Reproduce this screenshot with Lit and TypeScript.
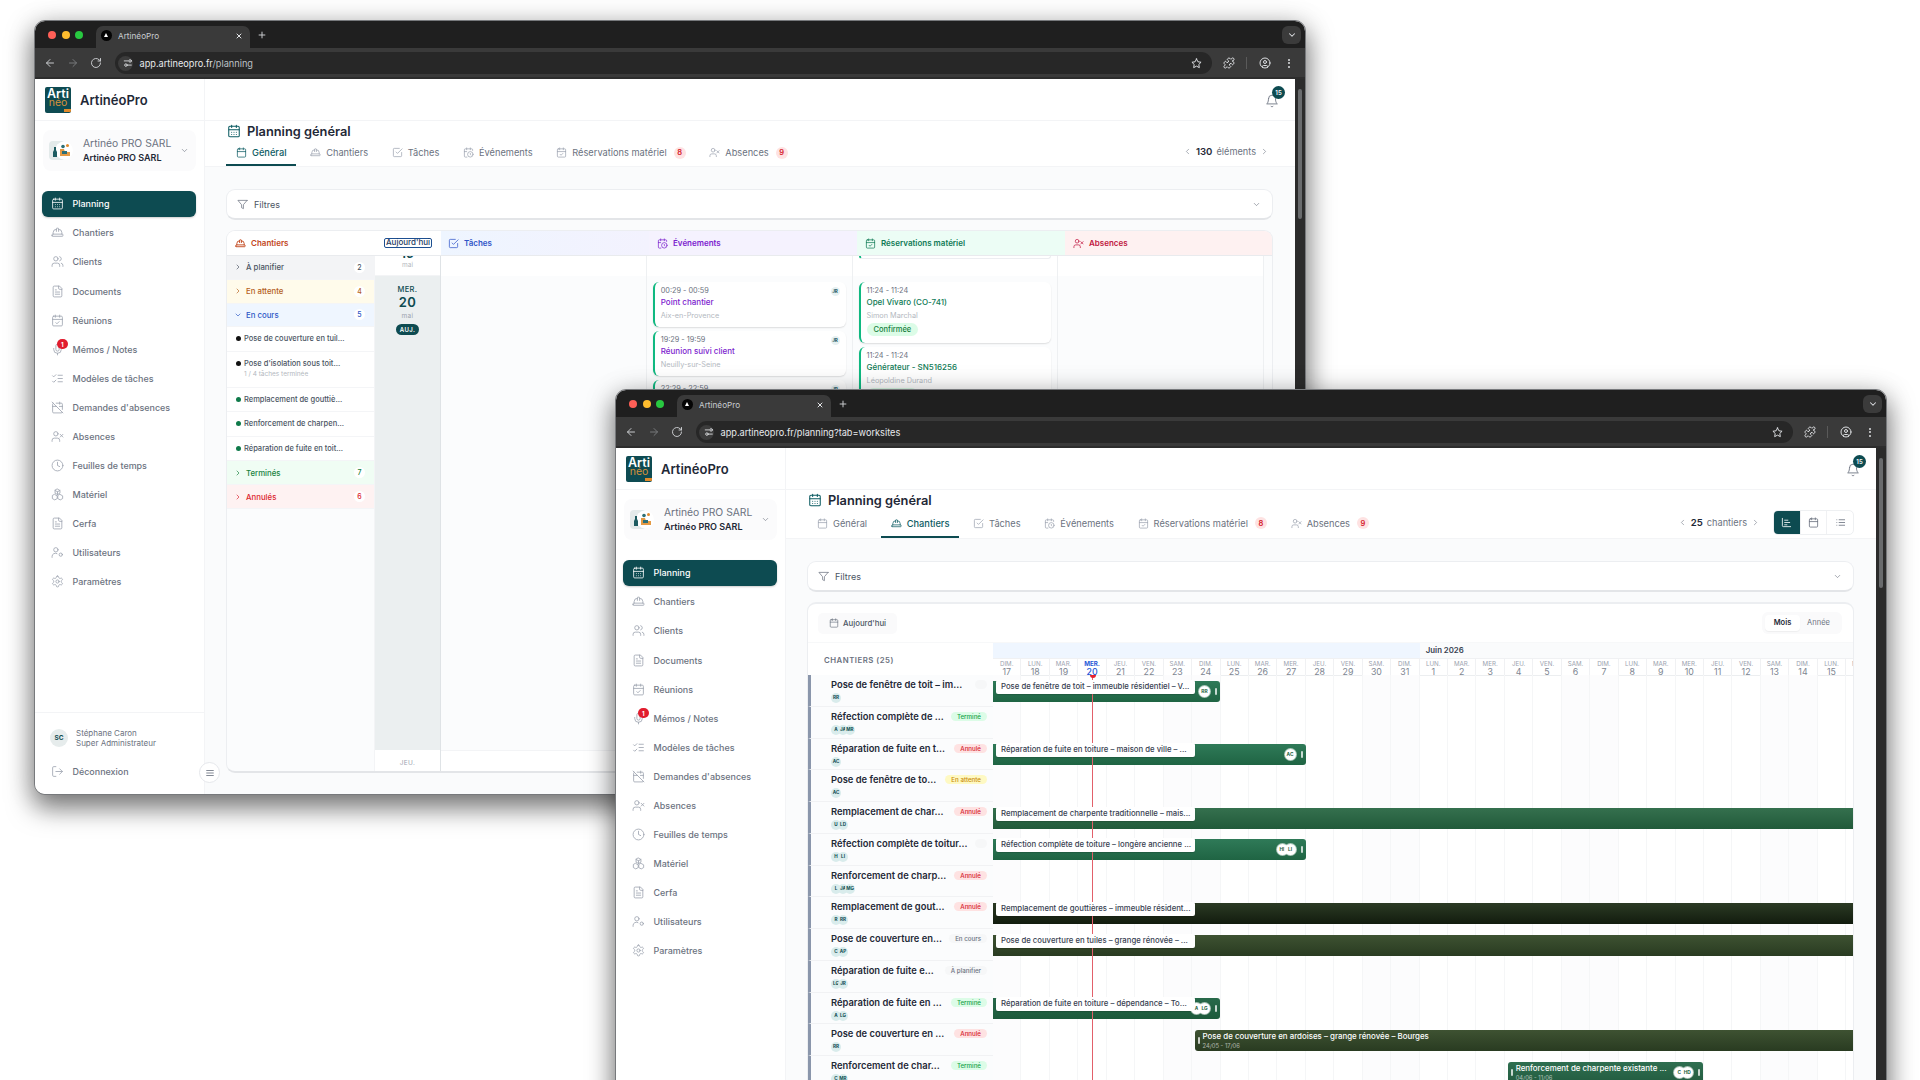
import {LitElement, html, css, svg, SVGTemplateResult, TemplateResult} from 'lit';
import {customElement, property} from 'lit/decorators.js';
import {classMap} from 'lit/directives/class-map.js';

const USER_BODY = svg`<path d="M16 21v-2a4 4 0 0 0-4-4H6a4 4 0 0 0-4 4v2"/><circle cx="9" cy="7" r="4"/>`;
const CAL = svg`<rect x="3" y="4" width="18" height="18" rx="2"/><path d="M16 2v4M8 2v4M3 10h18"/>`;

const ICONS: Record<string, SVGTemplateResult> = {
    calendar: CAL,
    calendarDays: svg`${CAL}<path d="M8 14h.01M12 14h.01M16 14h.01M8 18h.01M12 18h.01M16 18h.01"/>`,
    calendarCheck: svg`${CAL}<path d="m9 16 2 2 4-4"/>`,
    calendarOff: svg`<path d="M4.2 4.2A2 2 0 0 0 3 6v14a2 2 0 0 0 2 2h14a2 2 0 0 0 1.82-1.18M21 15.5V6a2 2 0 0 0-2-2H9.5M16 2v4M3 10h7M21 10h-5.5M2 2l20 20"/>`,
    calendarClock: svg`<path d="M21 7.5V6a2 2 0 0 0-2-2H5a2 2 0 0 0-2 2v14a2 2 0 0 0 2 2h3.5M16 2v4M8 2v4M3 10h5M17.5 17.5 16 16.3V14"/><circle cx="16" cy="16" r="6"/>`,
    hat: svg`<path d="M2 18a1 1 0 0 0 1 1h18a1 1 0 0 0 1-1v-2a1 1 0 0 0-1-1H3a1 1 0 0 0-1 1v2zM10 10V5a1 1 0 0 1 1-1h2a1 1 0 0 1 1 1v5M4 15v-3a6 6 0 0 1 6-6M14 6a6 6 0 0 1 6 6v3"/>`,
    users: svg`${USER_BODY}<path d="M22 21v-2a4 4 0 0 0-3-3.87M16 3.13a4 4 0 0 1 0 7.75"/>`,
    file: svg`<path d="M15 2H6a2 2 0 0 0-2 2v16a2 2 0 0 0 2 2h12a2 2 0 0 0 2-2V7ZM14 2v4a2 2 0 0 0 2 2h4M10 9H8M16 13H8M16 17H8"/>`,
    mic: svg`<path d="M12 2a3 3 0 0 0-3 3v7a3 3 0 0 0 6 0V5a3 3 0 0 0-3-3ZM19 10v2a7 7 0 0 1-14 0v-2M12 19v3"/>`,
    listChecks: svg`<path d="m3 17 2 2 4-4M3 7l2 2 4-4M13 6h8M13 12h8M13 18h8"/>`,
    userX: svg`${USER_BODY}<path d="m17 8 5 5M22 8l-5 5"/>`,
    clock: svg`<circle cx="12" cy="12" r="10"/><path d="M12 6v6l4 2"/>`,
    boxes: svg`<path d="m12 2 4.5 2.5v5L12 12 7.5 9.5v-5zM7 12l4.5 2.5v5L7 22l-4.5-2.5v-5zM17 12l4.5 2.5v5L17 22l-4.5-2.5v-5zM7.5 4.5 12 7l4.5-2.5M12 7v5"/>`,
    userCog: svg`<path d="M2 21v-2a6 6 0 0 1 9-5"/><circle cx="9" cy="7" r="4"/><circle cx="18" cy="16" r="3"/>`,
    gear: svg`<path d="M12.22 2h-.44a2 2 0 0 0-2 2v.18a2 2 0 0 1-1 1.73l-.43.25a2 2 0 0 1-2 0l-.15-.08a2 2 0 0 0-2.73.73l-.22.38a2 2 0 0 0 .73 2.73l.15.1a2 2 0 0 1 1 1.72v.51a2 2 0 0 1-1 1.74l-.15.09a2 2 0 0 0-.73 2.73l.22.38a2 2 0 0 0 2.73.73l.15-.08a2 2 0 0 1 2 0l.43.25a2 2 0 0 1 1 1.73V20a2 2 0 0 0 2 2h.44a2 2 0 0 0 2-2v-.18a2 2 0 0 1 1-1.73l.43-.25a2 2 0 0 1 2 0l.15.08a2 2 0 0 0 2.73-.73l.22-.39a2 2 0 0 0-.73-2.73l-.15-.08a2 2 0 0 1-1-1.74v-.5a2 2 0 0 1 1-1.74l.15-.09a2 2 0 0 0 .73-2.73l-.22-.38a2 2 0 0 0-2.73-.73l-.15.08a2 2 0 0 1-2 0l-.43-.25a2 2 0 0 1-1-1.73V4a2 2 0 0 0-2-2z"/><circle cx="12" cy="12" r="3"/>`,
    logout: svg`<path d="M9 21H5a2 2 0 0 1-2-2V5a2 2 0 0 1 2-2h4M16 17l5-5-5-5M21 12H9"/>`,
    funnel: svg`<path d="M22 3H2l8 9.46V19l4 2v-8.54L22 3z"/>`,
    check: svg`<path d="m9 11 3 3L22 4M21 12v7a2 2 0 0 1-2 2H5a2 2 0 0 1-2-2V5a2 2 0 0 1 2-2h11"/>`,
    down: svg`<path d="m6 9 6 6 6-6"/>`,
    right: svg`<path d="m9 18 6-6-6-6"/>`,
    left: svg`<path d="m15 18-6-6 6-6"/>`,
    bell: svg`<path d="M6 8a6 6 0 0 1 12 0c0 7 3 9 3 9H3s3-2 3-9M10.3 21a1.94 1.94 0 0 0 3.4 0"/>`,
    menu: svg`<path d="M4 6h16M4 12h16M4 18h16"/>`,
    gantt: svg`<path d="M3 3v16a2 2 0 0 0 2 2h16M8 7h7M8 12h11M8 17h5"/>`,
    list: svg`<path d="M9 6h12M9 12h12M9 18h12M4 6h.01M4 12h.01M4 18h.01"/>`,
    back: svg`<path d="M19 12H5M12 19l-7-7 7-7"/>`,
    forward: svg`<path d="M5 12h14M12 5l7 7-7 7"/>`,
    reload: svg`<path d="M21 12a9 9 0 1 1-2.64-6.36L21 8M21 3v5h-5"/>`,
    tune: svg`<path d="M3 7h9M20 17h-9"/><circle cx="17" cy="7" r="3"/><circle cx="7" cy="17" r="3"/>`,
    star: svg`<path d="m12 2 3.09 6.26L22 9.27l-5 4.87 1.18 6.88L12 17.77l-6.18 3.25L7 14.14 2 9.27l6.91-1.01L12 2z"/>`,
    puzzle: svg`<path d="M19.439 7.85c-.049.322.059.648.289.878l1.568 1.568c.47.47.706 1.087.706 1.704s-.235 1.233-.706 1.704l-1.611 1.611a.98.98 0 0 1-.837.276c-.47-.07-.802-.48-.968-.925a2.501 2.501 0 1 0-3.214 3.214c.446.166.855.497.925.968a.979.979 0 0 1-.276.837l-1.61 1.61a2.404 2.404 0 0 1-1.705.707 2.402 2.402 0 0 1-1.704-.706l-1.568-1.568a1.026 1.026 0 0 0-.877-.29c-.493.074-.84.504-1.02.968a2.5 2.5 0 1 1-3.237-3.237c.464-.18.894-.527.967-1.02a1.026 1.026 0 0 0-.289-.877l-1.568-1.568A2.402 2.402 0 0 1 1.998 12c0-.617.236-1.234.706-1.704L4.23 8.77c.24-.24.581-.353.917-.303.515.077.877.528 1.073 1.01a2.5 2.5 0 1 0 3.259-3.259c-.482-.196-.933-.558-1.01-1.073-.05-.336.062-.676.303-.917l1.525-1.525A2.402 2.402 0 0 1 12 1.998c.617 0 1.234.236 1.704.706l1.568 1.568c.23.23.556.338.877.29.493-.074.84-.504 1.02-.968a2.5 2.5 0 1 1 3.237 3.237c-.464.18-.894.527-.967 1.02Z"/>`,
    profile: svg`<circle cx="12" cy="12" r="10"/><circle cx="12" cy="10" r="3"/><path d="M7 20.66V19a2 2 0 0 1 2-2h6a2 2 0 0 1 2 2v1.66"/>`,
    close: svg`<path d="M18 6 6 18M6 6l12 12"/>`,
    plus: svg`<path d="M5 12h14M12 5v14"/>`,
};

function icon(name: string, size = 12, width = 1.6) {
    return html`<svg class="ic" width=${size} height=${size} viewBox="0 0 24 24" fill="none" stroke="currentColor"
        stroke-width=${width} stroke-linecap="round" stroke-linejoin="round">${ICONS[name]}</svg>`;
}

const base = css`
    * { box-sizing: border-box; }
    .ic { display: block; flex: none; }
`;

@customElement('browser-window')
class BrowserWindow extends LitElement {
    static styles = [base, css`
    :host {
        display: flex;
        flex-direction: column;
        width: 1270px;
        height: 773px;
        border-radius: 10px;
        overflow: hidden;
        background: #fff;
        font-family: Inter, "Liberation Sans", sans-serif;
        outline: 1px solid #77797c;
        box-shadow: 0 12px 26px 2px rgba(0,0,0,.5), 0 2px 30px rgba(0,0,0,.14);
    }
    .tabstrip {
        height: 27px;
        flex: none;
        display: flex;
        align-items: flex-end;
        background: #1f1f1f;
        padding-left: 13px;
        color: #dfe1e5;
    }
    .dots {
        display: flex;
        gap: 5.5px;
        align-self: center;
        width: 48px;
    }
    .dots i { width: 8px; height: 8px; border-radius: 50%; }
    .tab {
        width: 154px;
        height: 22px;
        background: #3a3a3a;
        border-radius: 7px 7px 0 0;
        display: flex;
        align-items: center;
        padding: 0 7px 3px 5px;
        font-size: 8.2px;
        color: #c9ccd0;
    }
    .fav {
        width: 11px;
        height: 11px;
        border-radius: 50%;
        background: #050505;
        margin-right: 6px;
        position: relative;
        flex: none;
    }
    .fav::after {
        content: '';
        position: absolute;
        left: 3px;
        top: 3px;
        border: 2.5px solid transparent;
        border-top: 0;
        border-bottom: 4px solid #fff;
    }
    .tab .x { margin-left: auto; color: #e4e6e9; }
    .plus { align-self: center; margin-left: 7px; color: #c7c9cc; }
    .caret {
        margin-left: auto;
        margin-right: 4px;
        align-self: center;
        width: 19px;
        height: 18px;
        background: #3b3b3b;
        border-radius: 6px;
        display: grid;
        place-items: center;
    }
    .toolbar {
        height: 31px;
        flex: none;
        background: #3a3a3a;
        border-bottom: 2px solid #2d2d2d;
        display: flex;
        align-items: center;
        color: #c7c9cc;
        padding: 1px 0 0 9px;
    }
    .nav { display: flex; gap: 11px; align-items: center; width: 71px; }
    .nav .off { color: #77797b; }
    .omni {
        width: 1097px;
        height: 22px;
        border-radius: 11px;
        background: #272727;
        display: flex;
        align-items: center;
        padding: 0 10px 0 3px;
        font-size: 9.2px;
        color: #e8eaed;
    }
    .site {
        width: 15px;
        height: 15px;
        border-radius: 50%;
        background: #3c3c3c;
        display: grid;
        place-items: center;
        margin-right: 6.5px;
    }
    .omni .path { color: var(--path-color, #e8eaed); }
    .omni .ic:last-child { margin-left: auto; color: #e8eaed; }
    .actions { display: flex; align-items: center; margin-left: 11px; color: #dcdee1; }
    .sep { width: 1px; height: 12px; background: #5a5a5a; margin: 0 12px 0 11px; }
    .more { display: flex; flex-direction: column; gap: 1.5px; margin-left: 17px; }
    .more i { width: 2px; height: 2px; border-radius: 50%; background: #dcdee1; }
    .viewport { flex: 1; display: flex; min-height: 0; }
    .content { flex: 1; min-width: 0; display: flex; }
    .scrollbar { width: 10px; flex: none; background: #2b2b2b; padding: 10px 3px 0; }
    .scrollbar i { display: block; width: 4px; height: 130px; background: #696b6d; border-radius: 2px; }
    `];

    @property() host = '';
    @property() path = '';

    render() {
        return html`
            <div class="tabstrip">
                <div class="dots">
                    <i style="background:#ff5f57"></i><i style="background:#febc2e"></i><i style="background:#28c840"></i>
                </div>
                <div class="tab"><span class="fav"></span>ArtinéoPro<span class="x">${icon('close', 8, 3)}</span></div>
                <span class="plus">${icon('plus', 10, 2.4)}</span>
                <div class="caret">${icon('down', 10, 2.5)}</div>
            </div>
            <div class="toolbar">
                <div class="nav">
                    ${icon('back', 12, 2)}
                    <span class="off">${icon('forward', 12, 2)}</span>
                    ${icon('reload', 12, 2)}
                </div>
                <div class="omni">
                    <span class="site">${icon('tune', 10, 2)}</span>
                    <span>${this.host}<span class="path">${this.path}</span></span>
                    ${icon('star', 11, 2)}
                </div>
                <div class="actions">
                    ${icon('puzzle', 12, 2)}
                    <span class="sep"></span>
                    ${icon('profile', 12, 2)}
                    <span class="more"><i></i><i></i><i></i></span>
                </div>
            </div>
            <div class="viewport">
                <div class="content"><slot></slot></div>
                <div class="scrollbar"><i></i></div>
            </div>
        `;
    }
}

const NAV = [
    ['calendarDays', 'Planning'],
    ['hat', 'Chantiers'],
    ['users', 'Clients'],
    ['file', 'Documents'],
    ['calendarCheck', 'Réunions'],
    ['mic', 'Mémos / Notes'],
    ['listChecks', 'Modèles de tâches'],
    ['calendarOff', "Demandes d'absences"],
    ['userX', 'Absences'],
    ['clock', 'Feuilles de temps'],
    ['boxes', 'Matériel'],
    ['file', 'Cerfa'],
    ['userCog', 'Utilisateurs'],
    ['gear', 'Paramètres'],
];

@customElement('app-sidebar')
class AppSidebar extends LitElement {
    static styles = [base, css`
    :host {
        display: flex;
        flex-direction: column;
        width: 169px;
        flex: none;
        background: #fff;
        border-right: 1px solid #f3f4f6;
        position: relative;
        z-index: 2;
    }
    .brand {
        height: 42px;
        flex: none;
        display: flex;
        align-items: center;
        gap: 9px;
        padding-left: 10px;
        border-bottom: 1px solid #f3f4f6;
        font-size: 13px;
        font-weight: 600;
        color: #1f2937;
        margin-right: -1px;
    }
    .logo {
        width: 26px;
        height: 26px;
        border-radius: 2px;
        background: #0e4b52;
        display: flex;
        flex-direction: column;
        align-items: center;
        font-size: 12.5px;
        line-height: 11px;
        color: #fff;
        font-weight: 600;
        padding-top: 1px;
        position: relative;
        overflow: hidden;
    }
    .logo b { color: #d6923a; font-weight: 400; font-size: 10.5px; line-height: 8px; }
    .logo i {
        position: absolute;
        right: 0;
        bottom: 1px;
        width: 7px;
        height: 3px;
        background: #e08a2c;
    }
    .company {
        margin: 9px 8px 0;
        height: 41px;
        flex: none;
        border-radius: 8px;
        background: #fbfbfc;
        display: flex;
        align-items: center;
        padding: 0 7px 0 6px;
        font-size: 10.3px;
        color: #6b7280;
    }
    .company svg.mark { margin-right: 9px; flex: none; }
    .company div { flex: 1; line-height: 14.5px; }
    .company strong { display: block; font-size: 9px; font-weight: 600; color: #1f2937; }
    nav { display: flex; flex-direction: column; gap: 2.6px; margin: 19.5px 8px 0 7px; }
    a {
        height: 26.5px;
        display: flex;
        align-items: center;
        gap: 8.5px;
        padding-left: 9px;
        border-radius: 6px;
        font-size: 8.95px;
        font-weight: 500;
        color: #6b7280;
        position: relative;
    }
    a .ic { color: #9ca3af; }
    a.on { background: #0d4b51; color: #fff; box-shadow: 0 1px 2px rgba(0,0,0,.2); }
    a.on .ic { color: #fff; }
    .dot {
        position: absolute;
        left: 15px;
        top: 3px;
        width: 10.5px;
        height: 10.5px;
        border-radius: 50%;
        background: #e11d2e;
        color: #fff;
        font-size: 6px;
        font-weight: 700;
        display: grid;
        place-items: center;
    }
    footer { margin-top: auto; flex: none; height: 82px; border-top: 1px solid #f3f4f6; }
    .user {
        display: flex;
        align-items: center;
        gap: 8px;
        margin: 15px 0 0 15px;
        font-size: 8px;
        line-height: 10px;
        color: #6b7280;
    }
    .avatar {
        width: 18px;
        height: 18px;
        border-radius: 50%;
        background: #e6ecec;
        color: #0d4b51;
        font-size: 6.5px;
        font-weight: 700;
        display: grid;
        place-items: center;
    }
    .logout {
        display: flex;
        align-items: center;
        gap: 8.5px;
        margin: 17px 0 0 16px;
        font-size: 8.95px;
        font-weight: 500;
        color: #6b7280;
    }
    .logout .ic { color: #9ca3af; }
    .fold {
        position: absolute;
        right: -16px;
        bottom: 11px;
        width: 21px;
        height: 21px;
        border-radius: 50%;
        border: 1px solid #e5e7eb;
        background: #fff;
        display: grid;
        place-items: center;
        color: #6b7280;
    }
    `];

    render() {
        return html`
            <div class="brand">
                <div class="logo">Arti<b>néo</b><i></i></div>
                ArtinéoPro
            </div>
            <div class="company">
                <svg class="mark" width="25" height="19" viewBox="0 0 25 19">
                    <rect width="16" height="19" rx="4" fill="#e3eaea"/>
                    <circle cx="15" cy="9.5" r="9" fill="#fff"/>
                    <path d="M5 6h2v3l1 2v5H4v-5l1-2z" fill="#1c5b60"/>
                    <circle cx="14" cy="5.5" r="1.8" fill="#2f6f74"/><circle cx="18.5" cy="4.5" r="1.5" fill="#e28a2c"/>
                    <path d="M11 8h4l1 3h5v4H11z" fill="#e49a45"/><path d="M13 10h5v3h-5z" fill="#2c6f78"/>
                </svg>
                <div>Artinéo PRO SARL<strong>Artinéo PRO SARL</strong></div>
                ${icon('down', 9)}
            </div>
            <nav>
                ${NAV.map(([ic, label], i) => html`
                    <a class=${classMap({on: i === 0})}>
                        ${icon(ic, 13, 1.5)}${label}
                        ${label.startsWith('Mémos') ? html`<span class="dot">1</span>` : ''}
                    </a>
                `)}
            </nav>
            <footer>
                <div class="user">
                    <span class="avatar">SC</span>
                    <span>Stéphane Caron<br>Super Administrateur</span>
                </div>
                <div class="logout">${icon('logout', 13, 1.5)}Déconnexion</div>
            </footer>
            <span class="fold">${icon('menu', 10, 2)}</span>
        `;
    }
}

const TABS = [
    ['calendar', 'Général', ''],
    ['hat', 'Chantiers', ''],
    ['check', 'Tâches', ''],
    ['calendarClock', 'Événements', ''],
    ['calendarCheck', 'Réservations matériel', '8'],
    ['userX', 'Absences', '9'],
];

@customElement('page-top')
class PageTop extends LitElement {
    static styles = [base, css`
    :host { display: block; flex: none; background: #fff; }
    .topbar {
        height: 42px;
        border-bottom: 1px solid #f3f4f6;
        display: flex;
        justify-content: flex-end;
        padding: 15px 16px 0 0;
    }
    .bell { position: relative; color: #6b7280; height: 14px; }
    .bell span {
        position: absolute;
        left: 7px;
        top: -8px;
        width: 13px;
        height: 13px;
        border-radius: 50%;
        background: #0d4b51;
        color: #fff;
        font-size: 6px;
        font-weight: 600;
        display: grid;
        place-items: center;
    }
    .title {
        height: 20px;
        display: flex;
        align-items: center;
        gap: 6px;
        padding-left: 22px;
        font-size: 12.8px;
        font-weight: 600;
        color: #1f2937;
    }
    .title .ic { color: #0d5c63; }
    .bar {
        display: flex;
        align-items: center;
        justify-content: space-between;
        padding: 0 22px 0 21px;
        border-bottom: 1px solid #f3f4f6;
    }
    .bar.tall { height: 29px; }
    .bar.short { height: 26px; }
    .tabs { display: flex; gap: 3.7px; height: 100%; }
    .tab {
        display: flex;
        align-items: center;
        gap: 5px;
        padding: 0 10px;
        font-size: 9.25px;
        color: #6b7280;
        border-bottom: 2px solid transparent;
    }
    .tab .ic { color: #9ca3af; }
    .tab.on { color: #0d5c63; border-color: #0d4b51; font-weight: 500; }
    .tab.on .ic { color: #0d5c63; }
    .badge {
        width: 12px;
        height: 12px;
        border-radius: 50%;
        background: #fee2e2;
        color: #d5202c;
        font-size: 7.5px;
        font-weight: 600;
        display: grid;
        place-items: center;
        margin-left: 2px;
    }
    `];

    @property() active = '';
    @property() size = 'short';

    render() {
        return html`
            <div class="topbar"><div class="bell">${icon('bell', 14, 1.5)}<span>15</span></div></div>
            <div class="title">${icon('calendarDays', 14, 1.8)}Planning général</div>
            <div class="bar ${this.size}">
                <div class="tabs">
                    ${TABS.map(([ic, label, count]) => html`
                        <div class=${classMap({tab: true, on: label === this.active})}>
                            ${icon(ic, 11, 1.6)}${label}
                            ${count ? html`<span class="badge">${count}</span>` : ''}
                        </div>
                    `)}
                </div>
                <slot></slot>
            </div>
        `;
    }
}

const pagerStyles = css`
    .pager {
        display: flex;
        align-items: center;
        gap: 4px;
        font-size: 9.2px;
        color: #6b7280;
    }
    .pager b { font-weight: 600; color: #1f2937; font-size: 9.6px; }
    .filters {
        height: 31px;
        flex: none;
        margin: 22px 22px 10px 21px;
        padding: 0 11px 0 10px;
        border: 1px solid #eceef1;
        border-bottom: 2px solid #e3e5e8;
        border-radius: 9px;
        background: #fff;
        display: flex;
        align-items: center;
        gap: 4px;
        font-size: 9px;
        color: #4b5563;
    }
    .filters .ic:first-child { color: #6b7280; }
    .filters .ic:last-child { color: #6b7280; margin-left: auto; }
`;

const GROUPS = [
    {label: 'À planifier', count: 2, cls: 'grey'},
    {label: 'En attente', count: 4, cls: 'amber'},
    {label: 'En cours', count: 5, cls: 'blue', open: true},
    {label: 'Terminés', count: 7, cls: 'green'},
    {label: 'Annulés', count: 6, cls: 'red'},
];

const OPEN_ITEMS = [
    {text: 'Pose de couverture en tuil...', dot: '#111'},
    {text: "Pose d'isolation sous toit...", dot: '#111', sub: '1 / 4 tâches terminée'},
    {text: 'Remplacement de gouttiè...', dot: '#0f7a4a'},
    {text: 'Renforcement de charpen...', dot: '#0f7a4a'},
    {text: 'Réparation de fuite en toit...', dot: '#0f7a4a'},
];

@customElement('planning-board')
class PlanningBoard extends LitElement {
    static styles = [base, pagerStyles, css`
    :host {
        flex: 1;
        min-width: 0;
        display: flex;
        flex-direction: column;
        background: #fafbfc;
    }
    .board {
        flex: none;
        height: 543px;
        margin: 0 22px 0 21px;
        border: 1px solid #eceef1;
        border-bottom: 2px solid #e3e5e8;
        border-radius: 9px;
        background: #fbfcfd;
        overflow: hidden;
        display: flex;
        flex-direction: column;
    }
    .heads {
        height: 25px;
        flex: none;
        display: grid;
        grid-template-columns: 148px 66px 208px 208px 208px 1fr;
        border-bottom: 1px solid #e9ebee;
        font-size: 8px;
        font-weight: 600;
    }
    .heads > div { display: flex; align-items: center; gap: 5px; padding-left: 8px; }
    .h-site { color: #c2471c; background: #fff; }
    .h-today { background: #fff; justify-content: center; padding: 0 !important; }
    .h-today span {
        border: 1.5px solid #1d4f91;
        border-radius: 2px;
        height: 10px;
        line-height: 7.5px;
        padding: 0 1px;
        color: #1e3a5f;
        font-weight: 500;
    }
    .h-task { color: #2f54c8; background: linear-gradient(90deg, #eef5ff, #f3f2fe); padding-left: 7px !important; }
    .h-evt { color: #7c22ce; background: #f5f2fe; }
    .h-res { color: #0f7a55; background: #ecfdf5; }
    .h-abs { color: #c01640; background: #fef1f1; }
    .body { flex: 1; min-height: 0; display: grid; grid-template-columns: 148px 66px 1fr; }
    .groups { font-size: 7.8px; border-right: 1px solid #f3f4f6; }
    .group {
        height: 23.8px;
        display: flex;
        align-items: center;
        padding: 0 9px 0 7px;
        font-weight: 500;
        border-bottom: 1px solid #f4f5f7;
    }
    .group .ic { margin-right: 4px; }
    .group span {
        margin-left: auto;
        width: 11px;
        height: 11px;
        border-radius: 50%;
        background: #fff;
        font-size: 7px;
        display: grid;
        place-items: center;
    }
    .grey { background: #f3f4f6; color: #4b5563; }
    .amber { background: #fffbeb; color: #b45f1d; }
    .blue { background: #eff6ff; color: #2b57c6; }
    .green { background: #f0fdf4; color: #15803d; }
    .red { background: #fef2f2; color: #dc1f2e; }
    .item {
        padding: 7px 6px 7.5px 9px;
        background: #fff;
        border-bottom: 1px solid #f4f5f7;
        font-size: 7.5px;
        font-weight: 500;
        line-height: 9px;
        color: #4b5563;
    }
    .item div { display: flex; align-items: center; gap: 3px; }
    .item i { width: 5px; height: 5px; border-radius: 50%; }
    .item small {
        display: block;
        margin: 2.5px 0 0 8px;
        font-size: 6.5px;
        font-weight: 400;
        color: #b3b8c0;
    }
    .days {
        display: flex;
        flex-direction: column;
        text-align: center;
        background: #ebeff0;
        border-right: 1px solid #dfe3e6;
    }
    .cap {
        height: 19.5px;
        flex: none;
        background: #fff;
        color: #b3b8c0;
        font-size: 6.5px;
        line-height: 10px;
        border-bottom: 1px solid #f3f4f6;
        overflow: hidden;
    }
    .cap b {
        display: block;
        height: 15px;
        margin: -10px 0 -1px;
        font-size: 13px;
        line-height: 15px;
        font-weight: 600;
        color: #0d4b51;
    }
    .today { flex: 1; padding-top: 9px; color: #0d4b51; font-size: 7.5px; font-weight: 500; letter-spacing: .4px; }
    .today strong { display: block; font-size: 13px; font-weight: 600; line-height: 17px; }
    .today small { display: block; color: #9ca3af; font-size: 6.5px; line-height: 10px; font-weight: 400; }
    .today em {
        display: block;
        margin: 3px auto 0;
        width: 23px;
        height: 11px;
        border-radius: 6px;
        background: #0d4b51;
        color: #fff;
        font-style: normal;
        font-size: 6px;
        line-height: 11px;
        font-weight: 600;
    }
    .end {
        height: 21px;
        flex: none;
        background: #fff;
        color: #9ca3af;
        font-size: 6.5px;
        padding-top: 9px;
        letter-spacing: .4px;
    }
    .lanes { display: flex; flex-direction: column; min-width: 0; }
    .lane-grid { display: grid; grid-template-columns: repeat(4, 1fr); margin-right: 8px; }
    .lane-grid > div { border-right: 1px solid #eef0f2; padding: 0 6px; }
    .lane-grid.cap-row { height: 19.5px; background: #fff; }
    .lane-grid.main { flex: 1; min-height: 0; overflow: hidden; }
    .lane-end { height: 21px; flex: none; background: #fff; border-top: 1px solid #f3f4f6; }
    .stub {
        height: 3px;
        border: 1px solid #eceef1;
        border-top: 0;
        border-left: 2px solid #10b981;
        border-radius: 0 0 5px 5px;
    }
    .card {
        position: relative;
        margin-top: 4.5px;
        padding: 4px 6px 0;
        height: 44.5px;
        background: #fff;
        border-left: 2px solid #10b981;
        border-radius: 6px;
        box-shadow: 0 1px 1.5px rgba(0,0,0,.12);
        font-size: 7.3px;
        color: #6b7280;
        line-height: 9px;
    }
    .card.tall { height: 60.5px; }
    .card:first-child { margin-top: 6.5px; }
    .card b { display: block; margin-top: 2px; font-size: 8px; font-weight: 500; line-height: 11px; }
    .card small { display: block; margin-top: 3px; font-size: 7.3px; color: #b3b8c0; }
    .card u {
        position: absolute;
        right: 6px;
        top: 5px;
        width: 9px;
        height: 9px;
        border-radius: 50%;
        background: #e6f0f1;
        color: #0d4b51;
        font-size: 4.5px;
        text-decoration: none;
        text-align: center;
        font-weight: 700;
    }
    .card em {
        display: inline-block;
        margin-top: 2.5px;
        padding: 0 7px;
        height: 13px;
        line-height: 13px;
        border-radius: 7px;
        background: #dcfce7;
        color: #15803d;
        font-style: normal;
        font-size: 7.5px;
        font-weight: 500;
    }
    .purple b { color: #7c22ce; }
    .teal b { color: #0f7a55; }
    `];

    private group(g: typeof GROUPS[number]) {
        return html`<div class="group ${g.cls}">${icon(g.open ? 'down' : 'right', 8, 2)}${g.label}<span>${g.count}</span></div>`;
    }

    render() {
        return html`
            <page-top active="Général" size="short">
                <div class="pager" style="margin-top:-4px;padding-right:4px">
                    ${icon('left', 9, 1.5)}<b>130</b> éléments ${icon('right', 9, 1.5)}
                </div>
            </page-top>
            <div class="filters">${icon('funnel', 11, 1.6)}<span style="margin-left:2px">Filtres</span>${icon('down', 9)}</div>
            <div class="board">
                <div class="heads">
                    <div class="h-site">${icon('hat', 11, 2)}Chantiers</div>
                    <div class="h-today"><span>Aujourd'hui</span></div>
                    <div class="h-task">${icon('check', 11)}Tâches</div>
                    <div class="h-evt">${icon('calendarClock', 11)}Événements</div>
                    <div class="h-res">${icon('calendarCheck', 11)}Réservations matériel</div>
                    <div class="h-abs">${icon('userX', 11)}Absences</div>
                </div>
                <div class="body">
                    <div class="groups">
                        ${GROUPS.slice(0, 3).map(g => this.group(g))}
                        ${OPEN_ITEMS.map(it => html`
                            <div class="item">
                                <div><i style="background:${it.dot}"></i>${it.text}</div>
                                ${it.sub ? html`<small>${it.sub}</small>` : ''}
                            </div>
                        `)}
                        ${GROUPS.slice(3).map(g => this.group(g))}
                    </div>
                    <div class="days">
                        <div class="cap"><b>19</b>mai</div>
                        <div class="today">MER.<strong>20</strong><small>mai</small><em>AUJ.</em></div>
                        <div class="end">JEU.</div>
                    </div>
                    <div class="lanes">
                        <div class="lane-grid cap-row">
                            <div></div><div></div><div><div class="stub"></div></div><div></div>
                        </div>
                        <div class="lane-grid main">
                            <div></div>
                            <div>
                                <div class="card purple">00:29 - 00:59<u>JR</u><b>Point chantier</b><small>Aix-en-Provence</small></div>
                                <div class="card purple">19:29 - 19:59<u>JR</u><b>Réunion suivi client</b><small>Neuilly-sur-Seine</small></div>
                                <div class="card purple">22:29 - 22:59<u>JR</u></div>
                            </div>
                            <div>
                                <div class="card teal tall">11:24 - 11:24<b>Opel Vivaro (CO-741)</b><small>Simon Marchal</small><em>Confirmée</em></div>
                                <div class="card teal tall">11:24 - 11:24<b>Générateur - SN516256</b><small>Léopoldine Durand</small><em>Confirmée</em></div>
                            </div>
                            <div></div>
                        </div>
                        <div class="lane-end"></div>
                    </div>
                </div>
            </div>
        `;
    }
}

const DAY_W = 28.45;
const WEEK = ['DIM.', 'LUN.', 'MAR.', 'MER.', 'JEU.', 'VEN.', 'SAM.'];
const DAYS = Array.from({length: 31}, (_, i) => ({
    name: WEEK[i % 7],
    num: i < 15 ? 17 + i : i - 14,
    weekend: i % 7 === 0 || i % 7 === 6,
    today: i === 3,
}));

interface Bar {
    left: number;
    width: number;
    top: string;
    bottom: string;
    label?: string;
    free?: string;
    dates?: string;
    people?: string[];
}

const GREEN = ['#2f7a58', '#1f6443'];
const MOSS = ['#35704e', '#215a3a'];
const BLACK = ['#2b3a24', '#121c0e'];
const OLIVE = ['#3e5232', '#293b21'];

const ROWS: {name: string; status: string; people: string[]; bar?: Bar}[] = [
    {name: 'Pose de fenêtre de toit – im...', status: 'blank', people: ['RR'],
        bar: {left: 0, width: 227, top: GREEN[0], bottom: GREEN[1], label: 'Pose de fenêtre de toit – immeuble résidentiel – V...', people: ['RR']}},
    {name: 'Réfection complète de ...', status: 'Terminé', people: ['A', 'JA', 'MR']},
    {name: 'Réparation de fuite en t...', status: 'Annulé', people: ['AC'],
        bar: {left: 0, width: 312.5, top: GREEN[0], bottom: GREEN[1], label: 'Réparation de fuite en toiture – maison de ville – ...', people: ['AC']}},
    {name: 'Pose de fenêtre de to...', status: 'En attente', people: ['AC']},
    {name: 'Remplacement de char...', status: 'Annulé', people: ['U', 'LD'],
        bar: {left: 0, width: 900, top: MOSS[0], bottom: MOSS[1], label: 'Remplacement de charpente traditionnelle – mais...'}},
    {name: 'Réfection complète de toitur...', status: 'blank', people: ['H', 'LI'],
        bar: {left: 0, width: 312.5, top: GREEN[0], bottom: GREEN[1], label: 'Réfection complète de toiture – longère ancienne ...', people: ['HI', 'LI']}},
    {name: 'Renforcement de charp...', status: 'Annulé', people: ['L', 'JA', 'MG']},
    {name: 'Remplacement de gout...', status: 'Annulé', people: ['R', 'RR'],
        bar: {left: 0, width: 900, top: BLACK[0], bottom: BLACK[1], label: 'Remplacement de gouttières – immeuble résident...'}},
    {name: 'Pose de couverture en...', status: 'En cours', people: ['C', 'AP'],
        bar: {left: 0, width: 900, top: OLIVE[0], bottom: OLIVE[1], label: 'Pose de couverture en tuiles – grange rénovée – ...'}},
    {name: 'Réparation de fuite e...', status: 'À planifier', people: ['LG', 'JR']},
    {name: 'Réparation de fuite en ...', status: 'Terminé', people: ['A', 'LG'],
        bar: {left: 0, width: 227, top: '#28694a', bottom: '#1c5a3b', label: 'Réparation de fuite en toiture – dépendance – To...', people: ['A', 'LG']}},
    {name: 'Pose de couverture en ...', status: 'Annulé', people: ['RR'],
        bar: {left: 201.5, width: 700, top: OLIVE[0], bottom: OLIVE[1], free: 'Pose de couverture en ardoises – grange rénovée – Bourges', dates: '24/05 - 17/06'}},
    {name: 'Renforcement de char...', status: 'Terminé', people: ['C', 'MR'],
        bar: {left: 514.7, width: 195, top: '#2f6f50', bottom: '#235c40', free: 'Renforcement de charpente existante ...', dates: '04/06 - 11/06', people: ['C', 'HD']}},
];

const STATUS: Record<string, string> = {
    'Terminé': 'ok',
    'Annulé': 'ko',
    'En attente': 'wait',
    'En cours': 'idle',
    'À planifier': 'idle',
    'blank': 'idle',
};

@customElement('gantt-view')
class GanttView extends LitElement {
    static styles = [base, pagerStyles, css`
    :host {
        flex: 1;
        min-width: 0;
        display: flex;
        flex-direction: column;
        background: #fafbfc;
    }
    .tools { display: flex; align-items: center; gap: 13px; margin-top: -4px; }
    .views {
        display: flex;
        width: 81px;
        height: 25px;
        border: 1px solid #eef0f2;
        border-radius: 5px;
        overflow: hidden;
        color: #6b7280;
    }
    .views span { flex: 1; display: grid; place-items: center; border-left: 1px solid #f0f1f3; }
    .views span.on { background: #0d4b51; color: #fff; border: 0; }
    .panel {
        flex: 1;
        margin: 0 22px 0 21px;
        border: 1px solid #eceef1;
        border-top-width: 2px;
        border-radius: 9px 9px 0 0;
        background: #fff;
        overflow: hidden;
        min-height: 0;
    }
    .panel-top {
        height: 38px;
        display: flex;
        align-items: center;
        justify-content: space-between;
        padding: 0 11px 0 10px;
    }
    .today-btn {
        height: 21px;
        display: flex;
        align-items: center;
        gap: 4px;
        padding: 0 11px;
        border-radius: 5px;
        background: #fafafb;
        font-size: 7.8px;
        font-weight: 500;
        color: #4b5563;
    }
    .today-btn .ic { color: #6b7280; }
    .range {
        display: flex;
        align-items: center;
        gap: 2px;
        width: 80px;
        height: 22px;
        padding: 3px 7px 3px 3px;
        border-radius: 6px;
        background: #fafafb;
        font-size: 7.5px;
        color: #6b7280;
    }
    .range span { flex: 1; text-align: center; line-height: 16px; }
    .range .on { flex: none; width: 35px; background: #fff; border-radius: 4px; font-weight: 600; color: #1f2937; box-shadow: 0 1px 1px rgba(0,0,0,.05); }
    .head { display: grid; grid-template-columns: 185px 1fr; height: 33px; border-top: 1px solid #f7f8f9; }
    .head-left {
        display: flex;
        align-items: center;
        padding-left: 16px;
        font-size: 7.8px;
        font-weight: 600;
        letter-spacing: .5px;
        color: #6b7280;
    }
    .months { display: flex; height: 15px; overflow: hidden; }
    .mai { width: 426.8px; flex: none; background: #eff6ff; }
    .juin {
        flex: 1;
        background: #fafbfc;
        padding-left: 6px;
        font-size: 7.8px;
        font-weight: 600;
        line-height: 15px;
        color: #374151;
    }
    .cols { display: flex; height: 18px; overflow: hidden; border-top: 1px solid #f0f1f3; border-bottom: 1px solid #eceef0; }
    .cols div {
        width: ${DAY_W}px;
        flex: none;
        text-align: center;
        font-size: 6.2px;
        line-height: 7px;
        padding-top: 1px;
        color: #9ca3af;
        border-right: 1px solid #f0f1f3;
    }
    .cols b { display: block; font-size: 8.8px; line-height: 10px; font-weight: 400; color: #7d8591; }
    .cols .now { color: #2456d6; font-weight: 700; }
    .cols .now b { color: #2456d6; font-weight: 500; }
    .rows { position: relative; overflow: hidden; }
    .stripes { position: absolute; left: 185px; right: 0; top: 0; bottom: 0; display: flex; }
    .stripes i { width: ${DAY_W}px; flex: none; border-right: 1px solid #f5f6f7; }
    .stripes i.we { background: #fcfcfd; }
    .now-line {
        position: absolute;
        left: 284px;
        top: 0;
        bottom: 0;
        width: 1px;
        background: #e2606a;
        z-index: 2;
    }
    .now-dot {
        position: absolute;
        left: 281.5px;
        top: -3px;
        width: 6px;
        height: 6px;
        border-radius: 50%;
        background: #e5222f;
        z-index: 4;
    }
    .row { position: relative; display: grid; grid-template-columns: 185px 1fr; height: 31.75px; }
    .cell {
        min-width: 0;
        background: #fbfcfd;
        border-left: 3px solid #8a96ab;
        border-bottom: 1.5px solid #f1f2f4;
        padding: 4px 6px 0 20px;
    }
    .line { display: flex; align-items: center; justify-content: space-between; height: 11px; }
    .name { font-size: 9.4px; font-weight: 600; color: #1f2937; white-space: nowrap; }
    .status {
        height: 9px;
        padding: 0 6px;
        border-radius: 5px;
        font-size: 6.2px;
        line-height: 9px;
        white-space: nowrap;
        font-weight: 500;
    }
    .ok { background: #dcfce7; color: #16a34a; }
    .ko { background: #fee2e2; color: #d5202c; }
    .wait { background: #fef9c3; color: #c98a08; }
    .idle { background: #f6f7f8; color: #6b7280; }
    .people { display: flex; margin-top: 3px; }
    .people span {
        width: 10px;
        height: 10px;
        border-radius: 50%;
        background: #d9ecec;
        margin-right: -3px;
        color: #0d4b51;
        font-size: 4.6px;
        font-weight: 700;
        line-height: 10px;
        text-align: center;
    }
    .track { position: relative; min-width: 0; }
    .bar {
        position: absolute;
        top: 5.5px;
        height: 21px;
        border-radius: 0 3px 3px 0;
        display: flex;
        align-items: center;
        justify-content: flex-end;
        padding-right: 3px;
    }
    .bar.free { border-radius: 3px; justify-content: space-between; padding: 0 3px; color: #fff; }
    .label {
        position: absolute;
        left: 3px;
        top: -1px;
        width: 198.5px;
        height: 14px;
        border-radius: 2px;
        background: #fff;
        box-shadow: 0 1px 1px rgba(0,0,0,.15);
        padding-left: 5px;
        font-size: 7.75px;
        font-weight: 500;
        line-height: 13px;
        color: #374151;
        white-space: nowrap;
        overflow: hidden;
        z-index: 3;
    }
    .free-text { position: absolute; left: 8px; top: 1px; font-size: 7.9px; font-weight: 500; line-height: 10px; white-space: nowrap; }
    .free-text small { display: block; font-size: 5.8px; opacity: .6; font-weight: 400; line-height: 9px; }
    .chips { display: flex; margin-right: 5px; position: relative; z-index: 3; }
    .chips span {
        width: 11px;
        height: 11px;
        border-radius: 50%;
        background: #fff;
        margin-left: -3px;
        color: #1f6443;
        font-size: 4.8px;
        font-weight: 700;
        line-height: 11px;
        text-align: center;
        box-shadow: 0 0 0 1px rgba(255,255,255,.6);
    }
    .grip { width: 2px; height: 7px; background: rgba(255,255,255,.75); border-radius: 1px; flex: none; }
    `];

    private renderBar(bar: Bar) {
        const style = `left:${bar.left}px;width:${bar.width}px;background:linear-gradient(${bar.top},${bar.bottom})`;
        const chips = bar.people ? html`
            <div class="chips">${bar.people.map(p => html`<span>${p}</span>`)}</div>
            <i class="grip"></i>` : '';
        if (bar.free) {
            return html`
                <div class="bar free" style=${style}>
                    <i class="grip"></i>
                    <div class="free-text">${bar.free}<small>${bar.dates}</small></div>
                    <span style="flex:1"></span>
                    ${chips}
                </div>`;
        }
        return html`<div class="bar" style=${style}><div class="label">${bar.label}</div>${chips}</div>`;
    }

    render(): TemplateResult {
        return html`
            <page-top active="Chantiers" size="tall">
                <div class="tools">
                    <div class="pager">
                        ${icon('left', 9, 1.5)}<b>25</b> chantiers ${icon('right', 9, 1.5)}
                    </div>
                    <div class="views">
                        <span class="on">${icon('gantt', 11, 1.8)}</span>
                        <span>${icon('calendar', 11, 1.8)}</span>
                        <span>${icon('list', 11, 1.8)}</span>
                    </div>
                </div>
            </page-top>
            <div class="filters">${icon('funnel', 11, 1.6)}<span style="margin-left:2px">Filtres</span>${icon('down', 9)}</div>
            <div class="panel">
                <div class="panel-top">
                    <div class="today-btn">${icon('calendar', 10, 1.6)}Aujourd'hui</div>
                    <div class="range"><span class="on">Mois</span><span>Année</span></div>
                </div>
                <div class="head">
                    <div class="head-left">CHANTIERS (25)</div>
                    <div style="min-width:0">
                        <div class="months"><div class="mai"></div><div class="juin">Juin 2026</div></div>
                        <div class="cols">
                            ${DAYS.map(d => html`<div class=${classMap({now: d.today})}>${d.name}<b>${d.num}</b></div>`)}
                        </div>
                    </div>
                </div>
                <div class="rows">
                    <div class="stripes">${DAYS.map(d => html`<i class=${classMap({we: d.weekend})}></i>`)}</div>
                    ${ROWS.map(row => html`
                        <div class="row">
                            <div class="cell">
                                <div class="line">
                                    <span class="name">${row.name}</span>
                                    <span class="status ${STATUS[row.status]}">${row.status === 'blank' ? '' : row.status}</span>
                                </div>
                                <div class="people">${row.people.map(p => html`<span>${p}</span>`)}</div>
                            </div>
                            <div class="track">${row.bar ? this.renderBar(row.bar) : ''}</div>
                        </div>
                    `)}
                    <div class="now-line"></div>
                    <div class="now-dot"></div>
                </div>
            </div>
        `;
    }
}

@customElement('app-root')
class AppRoot extends LitElement {
    static styles = css`
    :host {
        display: block;
        position: relative;
        width: 1920px;
        height: 1080px;
        overflow: hidden;
        background: #fff;
    }
    .back { position: absolute; left: 35px; top: 21px; }
    .front { position: absolute; left: 616px; top: 390px; }
    `;

    render() {
        return html`
            <browser-window class="back" host="app.artineopro.fr" path="/planning" style="--path-color:#bdc1c6">
                <app-sidebar></app-sidebar>
                <planning-board></planning-board>
            </browser-window>
            <browser-window class="front" host="app.artineopro.fr" path="/planning?tab=worksites">
                <app-sidebar></app-sidebar>
                <gantt-view></gantt-view>
            </browser-window>
        `;
    }
}
